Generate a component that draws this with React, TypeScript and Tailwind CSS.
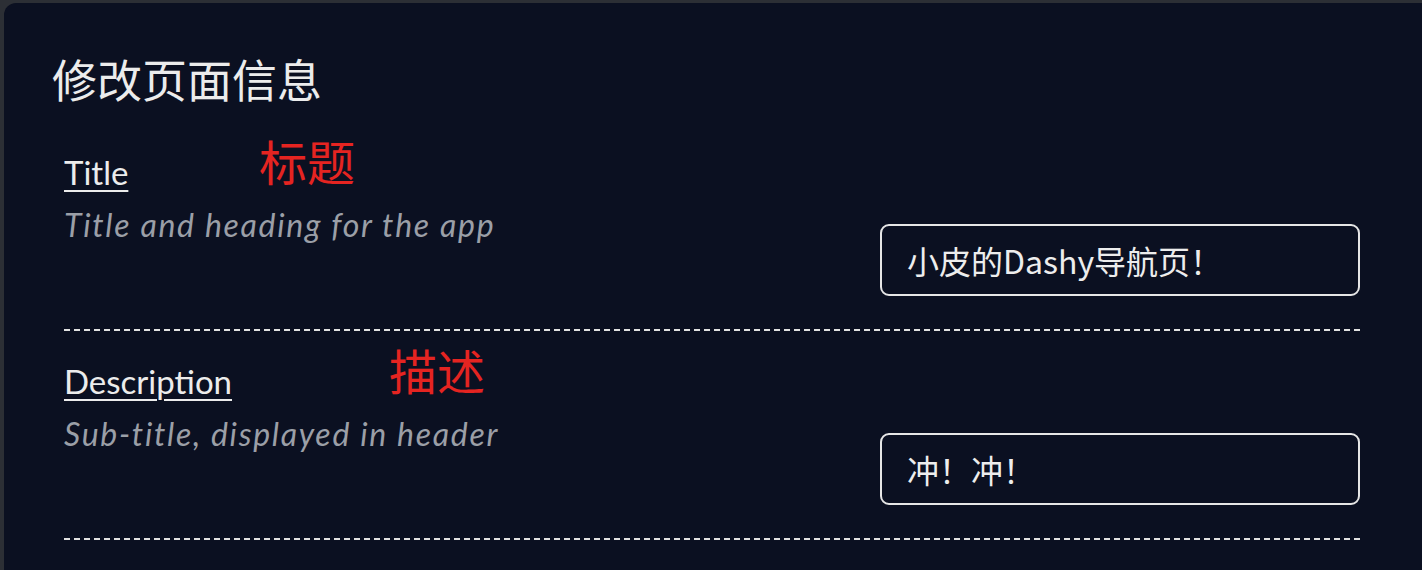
import React from "react";

const cjk = { fontFamily: '"Noto Sans CJK SC", "Noto Sans", sans-serif' };
const latin = { fontFamily: 'Lato, "Noto Sans CJK SC", sans-serif' };

function Row({
  label,
  note,
  noteLeft,
  desc,
  value,
}: {
  label: string;
  note: string;
  noteLeft: number;
  desc: string;
  value: string;
}) {
  return (
    <div>
      <div className="relative flex items-start justify-between">
        <div className="pt-[34px]" style={latin}>
          <div className="text-[33px] leading-none text-[#ececec] underline underline-offset-[5px] decoration-2">
            {label}
          </div>
          <div className="mt-[20px] text-[32px] leading-none italic tracking-[1.7px] text-[#9b9fa7]">
            {desc}
          </div>
        </div>
        <div
          className="absolute top-[14px] text-[48px] leading-none text-[#e52421]"
          style={{ ...cjk, left: noteLeft }}
        >
          {note}
        </div>
        <div className="mt-[102px] mb-[33px] flex h-[72px] w-[480px] items-center rounded-[9px] border-2 border-[#e6e6e6] bg-[#0b1021] px-[25px]">
          <span className="text-[32px] leading-none text-[#ededed]" style={cjk}>
            {value}
          </span>
        </div>
      </div>
      <div className="h-[2px] bg-[repeating-linear-gradient(to_right,#e2e2e2_0px,#e2e2e2_6px,transparent_6px,transparent_10px)]" />
    </div>
  );
}

export default function App() {
  return (
    <div className="h-[570px] w-[1422px] overflow-hidden bg-[#2c2f35] pl-[4px] pt-[3px]">
      <div className="h-full rounded-tl-[12px] bg-[#0b1021] pl-[48px] pr-[62px] pt-[53px]">
        <h1 className="text-[45px] leading-none text-[#ececec]" style={cjk}>
          修改页面信息
        </h1>
        <div className="mt-[21px] pl-[12px]">
          <Row
            label="Title"
            note="标题"
            noteLeft={195}
            desc="Title and heading for the app"
            value="小皮的Dashy导航页！"
          />
          <Row
            label="Description"
            note="描述"
            noteLeft={325}
            desc="Sub-title, displayed in header"
            value="冲！冲！"
          />
        </div>
      </div>
    </div>
  );
}
